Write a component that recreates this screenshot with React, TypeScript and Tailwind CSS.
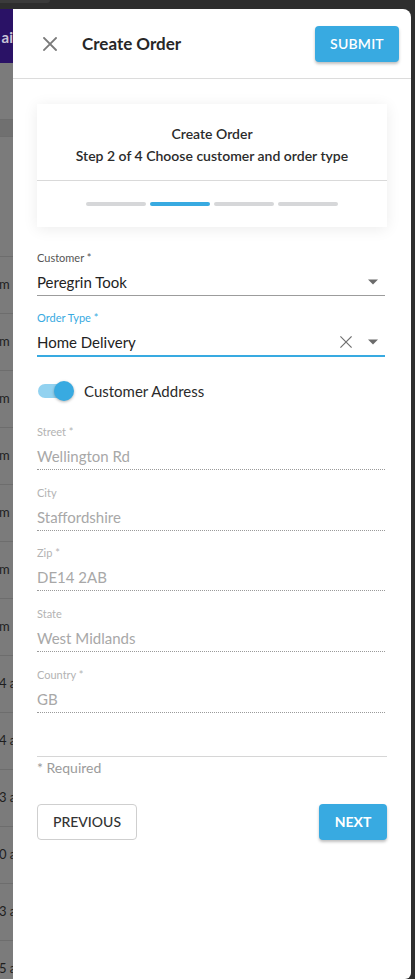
import { useState } from "react";

const BLUE = "#38aae1";

const stripRows = ["m", "m", "m", "m", "m", "m", "m", "4 a", "4 a", "3 a", "0 a", "3 a", "5 a"];

const Caret = () => (
  <svg width="12" height="6" viewBox="0 0 12 6" className="shrink-0">
    <path d="M1 0.5h10L6 5.5z" fill="#6b6b6b" />
  </svg>
);

const XIcon = ({ size, stroke = "#777", width = 1.6 }: { size: number; stroke?: string; width?: number }) => (
  <svg width={size} height={size} viewBox="0 0 14 14" className="shrink-0">
    <path d="M1 1L13 13M13 1L1 13" stroke={stroke} strokeWidth={width} strokeLinecap="square" />
  </svg>
);

interface FieldProps {
  label: string;
  value: string;
  tight?: boolean;
}

const ReadonlyField = ({ label, value, tight }: FieldProps) => (
  <div className={`${tight ? "mt-[15px]" : "mt-[16px]"} border-b border-dotted border-[#9a9a9a]`}>
    <div className="text-[11px] leading-[14px] text-[#b3b3b3]">{label}</div>
    <div className="mt-[6px] pb-[2px] text-[15px] leading-[22px] text-[#a8a8a8]">{value}</div>
  </div>
);

export default function App() {
  const [useAddress, setUseAddress] = useState(true);

  return (
    <div
      className="flex h-[979px] w-[415px] flex-col overflow-hidden bg-[#2e2e2e]"
      style={{ fontFamily: "Lato, 'Open Sans', sans-serif" }}
    >
      {/* status strip */}
      <div className="relative h-[9px] shrink-0">
        <div className="absolute left-0 top-0 h-[3px] w-[50px] rounded-br-md bg-[#3b3b3b]" />
      </div>

      <div className="flex flex-1 min-h-0">
        {/* backdrop peeking out on the left */}
        <div className="flex w-[13px] shrink-0 flex-col overflow-hidden bg-[#7b7b7b]">
          <div className="flex h-[54px] shrink-0 items-center justify-end overflow-hidden bg-[#2a1266] pt-[2px]">
            <span className="whitespace-nowrap text-[15px] font-bold text-[#c9c4d6]">ai</span>
          </div>
          <div className="h-[57px] shrink-0 border-b border-[#6d6d6d]" />
          <div className="h-[17px] shrink-0 border-b border-[#6d6d6d] bg-[#707070]" />
          <div className="h-[120px] shrink-0 border-b border-[#6d6d6d]" />
          {stripRows.map((t, i) => (
            <div
              key={i}
              className="flex h-[57px] shrink-0 items-center overflow-hidden border-b border-[#6d6d6d] pb-[1px]"
            >
              <span className="ml-[-1px] whitespace-nowrap text-[13px] text-[#1e1e1e]">{t}</span>
            </div>
          ))}
        </div>

        {/* drawer */}
        <div className="flex flex-1 flex-col rounded-tr-[8px] rounded-br-[6px] bg-white">
          <header className="flex h-[70px] shrink-0 items-center border-b border-[#dcdcdc] pl-[25px] pr-[12px]">
            <button className="flex h-[24px] w-[24px] items-center justify-center">
              <XIcon size={14} stroke="#7a7a7a" width={1.8} />
            </button>
            <h1 className="ml-[20px] text-[17px] font-bold text-[#272727]">Create Order</h1>
            <button
              className="ml-auto h-[36px] w-[84px] rounded-[4px] text-[14px] font-semibold tracking-[0.2px] text-white shadow-[0_2px_3px_rgba(0,0,0,0.25)]"
              style={{ backgroundColor: BLUE }}
            >
              SUBMIT
            </button>
          </header>

          <div className="flex flex-1 flex-col px-[24px] pt-[25px]">
            {/* stepper card */}
            <div className="shadow-[0_2px_14px_rgba(0,0,0,0.08)]">
              <div className="pt-[19px] pb-[13px] text-center text-[14px] font-semibold leading-[22px] text-[#2b2b2b]">
                <div>Create Order</div>
                <div>Step 2 of 4 Choose customer and order type</div>
              </div>
              <div className="border-t border-[#d9d9d9]" />
              <div className="flex justify-center gap-[4px] py-[21px]">
                <div className="h-[4px] w-[60px] rounded-full bg-[#d6d7d9]" />
                <div className="h-[4px] w-[60px] rounded-full" style={{ backgroundColor: BLUE }} />
                <div className="h-[4px] w-[60px] rounded-full bg-[#d6d7d9]" />
                <div className="h-[4px] w-[60px] rounded-full bg-[#d6d7d9]" />
              </div>
            </div>

            {/* customer */}
            <div className="mr-[2px] mt-[24px] border-b border-[#9c9c9c]">
              <div className="text-[11px] leading-[14px] text-[#555]">Customer *</div>
              <div className="mt-[6px] flex items-center pb-[2px]">
                <span className="flex-1 text-[15px] leading-[22px] text-[#222]">Peregrin Took</span>
                <span className="mr-[6px]">
                  <Caret />
                </span>
              </div>
            </div>

            {/* order type */}
            <div className="mr-[2px] mt-[15px] border-b-2" style={{ borderColor: BLUE }}>
              <div className="text-[11px] leading-[14px]" style={{ color: BLUE }}>
                Order Type *
              </div>
              <div className="mt-[6px] flex items-center pb-[2px]">
                <span className="flex-1 text-[15px] leading-[22px] text-[#222]">Home Delivery</span>
                <XIcon size={12} stroke="#6f6f6f" width={1.4} />
                <span className="ml-[15px] mr-[6px]">
                  <Caret />
                </span>
              </div>
            </div>

            {/* address toggle */}
            <div className="mt-[23px] flex items-center">
              <button
                onClick={() => setUseAddress(!useAddress)}
                className="relative h-[20px] w-[38px] shrink-0"
              >
                <span className="absolute left-[1px] top-[3px] h-[14px] w-[34px] rounded-full bg-[#92d2f0]" />
                <span
                  className={`absolute top-0 h-[20px] w-[20px] rounded-full shadow-[0_1px_3px_rgba(0,0,0,0.3)] ${
                    useAddress ? "left-[17px]" : "left-0"
                  }`}
                  style={{ backgroundColor: BLUE }}
                />
              </button>
              <span className="ml-[9px] text-[15px] text-[#2b2b2b]">Customer Address</span>
            </div>

            <div className="mr-[2px] mt-[6px]">
              <ReadonlyField label="Street *" value="Wellington Rd" />
              <ReadonlyField label="City" value="Staffordshire" />
              <ReadonlyField tight label="Zip *" value="DE14 2AB" />
              <ReadonlyField label="State" value="West Midlands" />
              <ReadonlyField label="Country *" value="GB" />
            </div>

            <div className="mt-[43px] border-t border-[#d6d6d6]" />
            <div className="mt-[1px] text-[14px] leading-[20px] text-[#9b9b9b]">* Required</div>

            <div className="mt-[26px] flex items-center justify-between">
              <button className="h-[36px] w-[100px] rounded-[4px] border border-[#cfcfcf] text-[14px] font-medium text-[#333]">
                PREVIOUS
              </button>
              <button
                className="h-[36px] w-[68px] rounded-[4px] text-[14px] font-bold text-white shadow-[0_2px_3px_rgba(0,0,0,0.25)]"
                style={{ backgroundColor: BLUE }}
              >
                NEXT
              </button>
            </div>
          </div>
        </div>

        <div className="w-[4px] shrink-0" />
      </div>
    </div>
  );
}
